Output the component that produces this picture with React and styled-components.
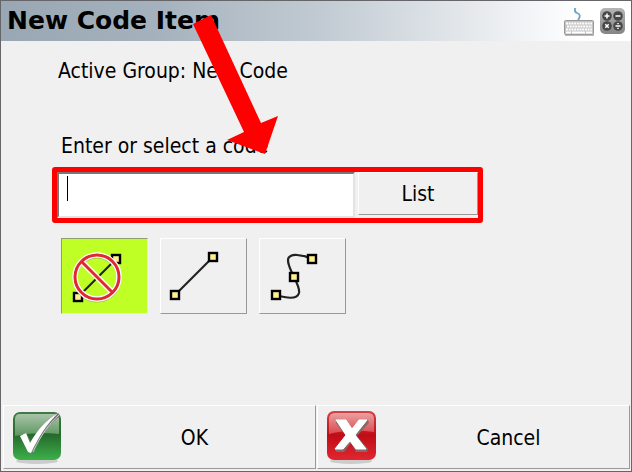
import React from 'react';
import styled, { createGlobalStyle } from 'styled-components';

const GlobalStyle = createGlobalStyle`
  * {
    box-sizing: border-box;
  }
  body {
    margin: 0;
    background-color: #f0f0f0;
    font-family: 'DejaVu Sans Condensed', 'Noto Sans', sans-serif;
  }
`;

const Dialog = styled.div`
  position: relative;
  display: flex;
  flex-direction: column;
  min-height: 100vh;
  border: 1px solid #65656a;
  background-color: #f0f0f0;
  color: #000;
`;

const TitleBar = styled.header`
  display: flex;
  align-items: center;
  justify-content: space-between;
  height: 40px;
  padding: 0 6px;
  background: linear-gradient(90deg, #98a7b3 0%, #a5b2bd 25%, #c3ccd4 52%, #fff 92%);
`;

const Title = styled.h1`
  margin: 0;
  font-family: 'DejaVu Sans', sans-serif;
  font-size: 25px;
  line-height: 40px;
  white-space: nowrap;
`;

const Tools = styled.div`
  display: flex;
  align-items: center;
  gap: 5px;
`;

const ToolButton = styled.button`
  display: flex;
  padding: 0;
  border: none;
  background: none;
`;

const Content = styled.main`
  flex: 1;
  padding: 16px 51px;
`;

const Group = styled.p`
  margin: 0 0 47px 6px;
  font-size: 21px;
  line-height: 28px;
`;

const Label = styled.label`
  display: block;
  margin: 0 0 7px 9px;
  font-size: 21px;
  line-height: 28px;
`;

const CodeRow = styled.div`
  display: flex;
  gap: 3px;
  margin-right: 97px;
  border: 5px solid #fe0000;
  border-radius: 3px;
`;

const Field = styled.div`
  position: relative;
  flex: 1;
`;

const CodeInput = styled.input`
  display: block;
  width: 100%;
  height: 46px;
  padding: 0 8px;
  border: 2px solid;
  border-color: #777 #e3e3e3 #e3e3e3 #777;
  outline: none;
  background-color: #fff;
  caret-color: transparent;
  font: inherit;
  font-size: 21px;
`;

const Caret = styled.span`
  position: absolute;
  top: 4px;
  left: 10px;
  width: 1px;
  height: 25px;
  background-color: #000;
`;

const RaisedButton = styled.button`
  border: 1px solid;
  border-color: #fff #999 #999 #fff;
  border-radius: 0;
  background-color: #f0f0f0;
  color: #000;
  font: inherit;
  font-size: 21px;
`;

const ListButton = styled(RaisedButton)`
  width: 120px;
  height: 43px;
`;

const Modes = styled.div`
  display: flex;
  gap: 12px;
  margin: 15px 0 0 9px;
`;

const ModeButton = styled(RaisedButton)`
  display: flex;
  width: 87px;
  height: 76px;
  padding: 0;
  ${({ $active }) =>
    $active && 'background-color: #bfff26; border-color: #8f9f70 #dfff90 #dfff90 #8f9f70;'}
`;

const Footer = styled.footer`
  display: flex;
  gap: 1px;
  padding: 0 1px 2px 2px;
`;

const ActionButton = styled(RaisedButton)`
  display: flex;
  align-items: center;
  flex: 1;
  height: 64px;
  padding: 0 0 0 5px;
`;

const ActionText = styled.span`
  flex: 1;
  padding: 2px 0 0 11px;
`;

const Arrow = styled.svg`
  position: absolute;
  top: -1px;
  left: -1px;
  pointer-events: none;
`;

const Node = ({ x, y }) => (
  <rect x={x - 4} y={y - 4} width="8" height="8" fill="#fff08a" stroke="#000" strokeWidth="2.4" />
);

const NoLineIcon = () => (
  <svg width="85" height="74" viewBox="0 0 85 74">
    <path d="M16 58L54 20" stroke="#222" strokeWidth="2.2" />
    <Node x={16} y={58} />
    <Node x={54} y={20} />
    <g fill="none">
      <circle cx="35" cy="39" r="22" stroke="#777" strokeWidth="5" opacity="0.5" />
      <circle cx="35" cy="38" r="22" stroke="#fff" strokeWidth="5.6" />
      <path d="M20 23L50 53" stroke="#fff" strokeWidth="5.6" />
      <circle cx="35" cy="38" r="22" stroke="#e02832" strokeWidth="3" />
      <path d="M20 23L50 53" stroke="#e02832" strokeWidth="3" />
    </g>
  </svg>
);

const LineIcon = () => (
  <svg width="85" height="74" viewBox="0 0 85 74">
    <path d="M14 56L52 18" stroke="#222" strokeWidth="2.2" />
    <Node x={14} y={56} />
    <Node x={52} y={18} />
  </svg>
);

const CurveIcon = () => (
  <svg width="85" height="74" viewBox="0 0 85 74">
    <path
      d="M52 20C44 16 28 13 28 21C28 27 31 31 34 38C37 44 40 50 39 54C37 61 26 59 16 56"
      fill="none"
      stroke="#222"
      strokeWidth="2.2"
    />
    <Node x={16} y={56} />
    <Node x={34} y={38} />
    <Node x={52} y={20} />
  </svg>
);

const KeyboardIcon = () => (
  <svg width="32" height="32" viewBox="0 0 32 32">
    <path
      d="M15 15C18 11 17 9 14 8C11 7 12 5 12 3"
      fill="none"
      stroke="#6fa3c4"
      strokeWidth="1.8"
    />
    <path d="M2 30H31" stroke="#bbb" strokeWidth="2" />
    <rect x="1.5" y="15.5" width="29" height="14" rx="1" fill="#c4c4c4" stroke="#999" />
    <path d="M3 18.5H29M3 24.5H29" stroke="#fff" strokeWidth="2" strokeDasharray="2 0.7" />
    <path d="M4 21.5H29" stroke="#fff" strokeWidth="2" strokeDasharray="2 0.7" />
    <path d="M3 27.5H8M9 27.5H22M23 27.5H29" stroke="#fff" strokeWidth="2" />
  </svg>
);

const CalculatorIcon = () => (
  <svg width="25" height="26" viewBox="0 0 25 26">
    <defs>
      <linearGradient id="calc" x2="0" y2="1">
        <stop offset="0" stopColor="#b5b5b5" />
        <stop offset="1" stopColor="#858585" />
      </linearGradient>
    </defs>
    <rect width="25" height="26" rx="5" fill="url(#calc)" />
    <g fill="#484848">
      <circle cx="7" cy="8" r="4.8" />
      <circle cx="18" cy="8" r="4.8" />
      <circle cx="7" cy="18" r="4.8" />
      <circle cx="18" cy="18" r="4.8" />
    </g>
    <path
      d="M4.5 8H9.5M7 5.5V10.5M15.5 8H20.5M5.3 16.3L8.7 19.7M8.7 16.3L5.3 19.7M15.5 18H20.5M18 15V16.3M18 19.7V21"
      stroke="#fff"
      strokeWidth="1.5"
    />
  </svg>
);

const OkIcon = () => (
  <svg width="54" height="56" viewBox="0 0 54 56">
    <defs>
      <linearGradient id="okBase" x2="0" y2="1">
        <stop offset="0" stopColor="#3f7a45" />
        <stop offset="0.48" stopColor="#256b2c" />
        <stop offset="1" stopColor="#3db04a" />
      </linearGradient>
      <linearGradient id="okGloss" x2="0" y2="1">
        <stop offset="0" stopColor="#a9c4a9" />
        <stop offset="1" stopColor="#5c9660" />
      </linearGradient>
    </defs>
    <ellipse cx="28" cy="52" rx="21" ry="3" fill="#ccc" />
    <rect x="4" y="3" width="48" height="48" rx="7" fill="url(#okBase)" />
    <path d="M6 10Q6 5 11 5H45Q50 5 50 10V25Q28 22 6 27Z" fill="url(#okGloss)" />
    <path
      d="M11 27L17 24L22 33C30 19 37 11 49 4L51 7C39 16 31 27 23 45L20 44Z"
      fill="#777"
    />
    <path d="M11 27L17 24L21 34C29 20 37 11 49 4C38 15 30 27 22 44L19 43Z" fill="#fff" />
    <path d="M24 43C32 26 40 15 50 6" fill="none" stroke="#ccc" strokeWidth="1" />
  </svg>
);

const CancelIcon = () => (
  <svg width="54" height="56" viewBox="0 0 54 56">
    <defs>
      <linearGradient id="cancelBase" x2="0" y2="1">
        <stop offset="0" stopColor="#d54248" />
        <stop offset="0.5" stopColor="#c00c16" />
        <stop offset="1" stopColor="#df2731" />
      </linearGradient>
      <linearGradient id="cancelGloss" x2="0" y2="1">
        <stop offset="0" stopColor="#eaa0a0" />
        <stop offset="1" stopColor="#d9484e" />
      </linearGradient>
    </defs>
    <ellipse cx="28" cy="52" rx="21" ry="3" fill="#ccc" />
    <rect x="4" y="2" width="49" height="49" rx="7" fill="url(#cancelBase)" />
    <path d="M6 10Q6 4 12 4H45Q51 4 51 10V23Q28 19 6 25Z" fill="url(#cancelGloss)" />
    <path
      d="M13 12H24L29 20L37 11H45L46 14L34 27L45 40L44 43H33L28 34L21 43H13L12 40L23 27L13 14Z"
      fill="#85696b"
    />
    <path
      d="M13 11H23L29 20L36 11H44L32 26L43 40H33L27 32L20 40H12L23 26Z"
      fill="#fff"
      stroke="#fff"
      strokeLinejoin="round"
    />
  </svg>
);

const App = () => (
  <>
    <GlobalStyle />
    <Dialog>
      <TitleBar>
        <Title>New Code Item</Title>
        <Tools>
          <ToolButton aria-label="Keyboard">
            <KeyboardIcon />
          </ToolButton>
          <ToolButton aria-label="Calculator">
            <CalculatorIcon />
          </ToolButton>
        </Tools>
      </TitleBar>
      <Content>
        <Group>Active Group: New Code</Group>
        <Label htmlFor="code">Enter or select a code</Label>
        <CodeRow>
          <Field>
            <CodeInput id="code" type="text" />
            <Caret />
          </Field>
          <ListButton>List</ListButton>
        </CodeRow>
        <Modes>
          <ModeButton $active aria-label="No line">
            <NoLineIcon />
          </ModeButton>
          <ModeButton aria-label="Line">
            <LineIcon />
          </ModeButton>
          <ModeButton aria-label="Curve">
            <CurveIcon />
          </ModeButton>
        </Modes>
      </Content>
      <Footer>
        <ActionButton>
          <OkIcon />
          <ActionText>OK</ActionText>
        </ActionButton>
        <ActionButton>
          <CancelIcon />
          <ActionText>Cancel</ActionText>
        </ActionButton>
      </Footer>
      <Arrow width="300" height="160" viewBox="0 0 300 160">
        <path d="M193 24L211 15L261 123L278 116L265 154L227 140L244 132Z" fill="#fe0000" />
      </Arrow>
    </Dialog>
  </>
);

export default App;
